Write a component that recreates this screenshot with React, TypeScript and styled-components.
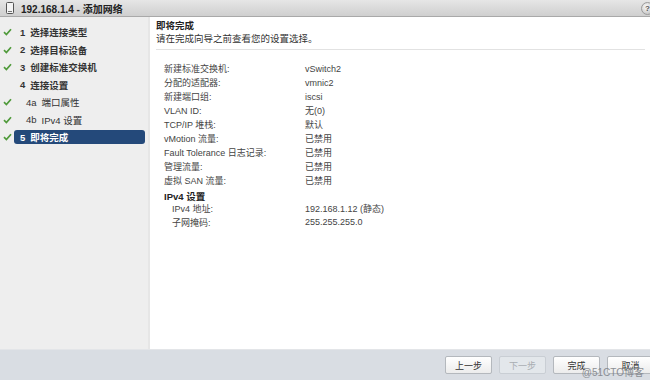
import React from 'react';
import styled, { createGlobalStyle } from 'styled-components';

const GlobalStyles = createGlobalStyle`
  html, body {
    margin: 0;
    padding: 0;
    width: 650px;
    height: 380px;
    overflow: hidden;
    font-family: "Liberation Sans", Arial, "Noto Sans CJK SC", sans-serif;
    color: #333;
  }
`;

const Window = styled.div`
  position: relative;
  width: 650px;
  height: 380px;
  display: flex;
  flex-direction: column;
  background: #fff;
`;

const TitleBar = styled.div`
  height: 16px;
  flex-shrink: 0;
  display: flex;
  align-items: center;
  padding-left: 6px;
  gap: 7px;
  background: linear-gradient(#e6e6e6, #cfcfcf);
  border-bottom: 1px solid #a9a9a9;
  font-size: 10px;
  font-weight: bold;
  color: #222;
`;

const TitleText = styled.span`
  flex: 1;
`;

const HelpIcon = styled.div`
  width: 11px;
  height: 11px;
  border-radius: 50%;
  margin-right: -4px;
  background: radial-gradient(circle at 40% 35%, #fafafa, #b8b8b8);
  border: 1px solid #9a9a9a;
  font-size: 8px;
  line-height: 11px;
  text-align: center;
  color: #555;
`;

const Body = styled.div`
  flex: 1;
  display: flex;
  min-height: 0;
`;

const Sidebar = styled.div`
  width: 148px;
  flex-shrink: 0;
  background: #eeeeee;
  border-right: 2px solid #e6e6e6;
  padding-top: 8px;
  display: flex;
  flex-direction: column;
  gap: 3.5px;
`;

const Step = styled.div`
  display: flex;
  align-items: center;
  height: 14px;
  font-size: 9.5px;
  color: #333;
`;

const CheckSlot = styled.div`
  width: 14px;
  display: flex;
  justify-content: center;
  flex-shrink: 0;
`;

const StepLabel = styled.div<{ $active?: boolean; $sub?: boolean }>`
  flex: 1;
  height: 14px;
  display: flex;
  align-items: center;
  margin-right: 3px;
  padding-left: ${(p) => (p.$sub ? '12px' : '6px')};
  border-radius: 3px;
  font-weight: ${(p) => (p.$sub ? 'normal' : 'bold')};
  background: ${(p) => (p.$active ? '#24497a' : 'transparent')};
  color: ${(p) => (p.$active ? '#fff' : '#333')};
`;

const Num = styled.span`
  margin-right: 5px;
`;

const Content = styled.div`
  flex: 1;
  padding: 3px 5px 0 6px;
  display: flex;
  flex-direction: column;
`;

const Header = styled.div`
  padding-bottom: 3px;
  border-bottom: 1px solid #e2e2e2;
`;

const HeaderTitle = styled.div`
  font-size: 9.5px;
  font-weight: bold;
  color: #222;
  line-height: 12px;
`;

const HeaderSub = styled.div`
  font-size: 9.5px;
  color: #333;
  line-height: 14px;
`;

const Summary = styled.div`
  padding: 12px 0 0 8px;
  display: grid;
  grid-template-columns: 141px 1fr;
  grid-auto-rows: 13.95px;
  font-size: 9px;
  color: #444;
  align-items: center;
`;

const Label = styled.div<{ $indent?: boolean }>`
  padding-left: ${(p) => (p.$indent ? '8px' : '0')};
`;

const Value = styled.div``;

const Section = styled.div`
  grid-column: 1 / 3;
  font-weight: bold;
  font-size: 9.5px;
  color: #222;
  margin-top: 3px;
`;

const Footer = styled.div`
  height: 30px;
  flex-shrink: 0;
  background: #d9dde3;
  border-top: 1px solid #e3e5e8;
  display: flex;
  justify-content: flex-end;
  align-items: center;
  gap: 7px;
  margin-right: -4px;
`;

const Button = styled.button<{ $disabled?: boolean }>`
  width: 47px;
  height: 18px;
  padding: 0;
  font-family: inherit;
  font-size: 9px;
  border: 1px solid ${(p) => (p.$disabled ? '#c9ced4' : '#b4b8bd')};
  border-radius: 2px;
  background: ${(p) => (p.$disabled ? '#e3e7eb' : 'linear-gradient(#ffffff, #ececec)')};
  color: ${(p) => (p.$disabled ? '#a9adb2' : '#333')};
`;

const Watermark = styled.div`
  position: absolute;
  right: 6px;
  bottom: 1px;
  font-size: 10px;
  color: #7b7f86;
  opacity: 0.85;
`;

const Check = () => (
  <svg width="9" height="8" viewBox="0 0 9 8">
    <path d="M1 4.2 L3.4 6.6 L8 1.2" fill="none" stroke="#4f9a3a" strokeWidth="1.7" />
  </svg>
);

const HostIcon = () => (
  <svg width="8" height="12" viewBox="0 0 8 12">
    <rect x="0.5" y="0.5" width="7" height="11" rx="1" fill="#f4f4f4" stroke="#555" />
    <line x1="2" y1="9.5" x2="6" y2="9.5" stroke="#777" />
  </svg>
);

const steps = [
  { num: '1', text: '选择连接类型', done: true },
  { num: '2', text: '选择目标设备', done: true },
  { num: '3', text: '创建标准交换机', done: true },
  { num: '4', text: '连接设置', done: false },
  { num: '4a', text: '端口属性', done: true, sub: true },
  { num: '4b', text: 'IPv4 设置', done: true, sub: true },
  { num: '5', text: '即将完成', done: true, active: true },
];

const rows = [
  ['新建标准交换机:', 'vSwitch2'],
  ['分配的适配器:', 'vmnic2'],
  ['新建端口组:', 'iscsi'],
  ['VLAN ID:', '无(0)'],
  ['TCP/IP 堆栈:', '默认'],
  ['vMotion 流量:', '已禁用'],
  ['Fault Tolerance 日志记录:', '已禁用'],
  ['管理流量:', '已禁用'],
  ['虚拟 SAN 流量:', '已禁用'],
];

const ipv4 = [
  ['IPv4 地址:', '192.168.1.12 (静态)'],
  ['子网掩码:', '255.255.255.0'],
];

const App: React.FC = () => {
  return (
    <>
      <GlobalStyles />
      <Window>
        <TitleBar>
          <HostIcon />
          <TitleText>192.168.1.4 - 添加网络</TitleText>
          <HelpIcon>?</HelpIcon>
        </TitleBar>
        <Body>
          <Sidebar>
            {steps.map((s) => (
              <Step key={s.num}>
                <CheckSlot>{s.done && <Check />}</CheckSlot>
                <StepLabel $active={s.active} $sub={s.sub}>
                  <Num>{s.num}</Num>
                  {s.text}
                </StepLabel>
              </Step>
            ))}
          </Sidebar>
          <Content>
            <Header>
              <HeaderTitle>即将完成</HeaderTitle>
              <HeaderSub>请在完成向导之前查看您的设置选择。</HeaderSub>
            </Header>
            <Summary>
              {rows.map(([l, v]) => (
                <React.Fragment key={l}>
                  <Label>{l}</Label>
                  <Value>{v}</Value>
                </React.Fragment>
              ))}
              <Section>IPv4 设置</Section>
              {ipv4.map(([l, v]) => (
                <React.Fragment key={l}>
                  <Label $indent>{l}</Label>
                  <Value>{v}</Value>
                </React.Fragment>
              ))}
            </Summary>
          </Content>
        </Body>
        <Footer>
          <Button>上一步</Button>
          <Button $disabled>下一步</Button>
          <Button>完成</Button>
          <Button>取消</Button>
        </Footer>
        <Watermark>@51CTO博客</Watermark>
      </Window>
    </>
  );
};

export default App;
